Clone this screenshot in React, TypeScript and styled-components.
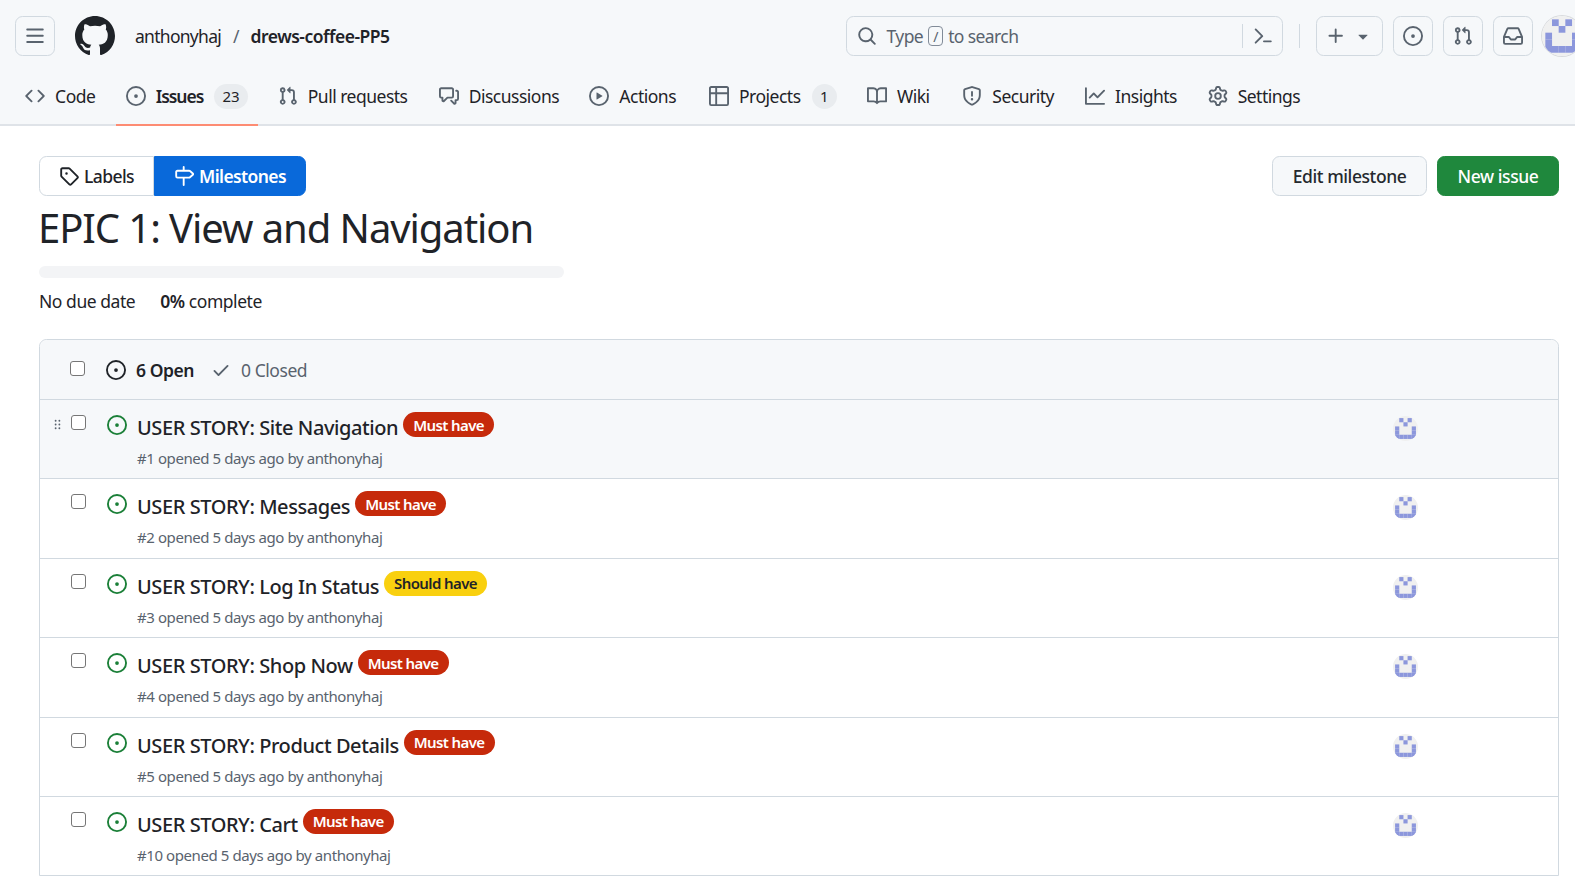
import { ReactNode } from 'react';
import styled, { createGlobalStyle } from 'styled-components';

const GlobalStyle = createGlobalStyle`
  * {
    box-sizing: border-box;
  }
  html,
  body {
    margin: 0;
    height: 100%;
    overflow: hidden;
    background: #fff;
    color: #1f2328;
    font-family: 'Noto Sans', 'Open Sans', Arial, sans-serif;
    font-size: 17.5px;
  }
`;

const Paths = {
  mark: 'M8 0c4.42 0 8 3.58 8 8a8.013 8.013 0 0 1-5.45 7.59c-.4.08-.55-.17-.55-.38 0-.27.01-1.13.01-2.2 0-.75-.25-1.23-.54-1.48 1.78-.2 3.65-.88 3.65-3.95 0-.88-.31-1.59-.82-2.15.08-.2.36-1.02-.08-2.12 0 0-.67-.22-2.2.82-.64-.18-1.32-.27-2-.27-.68 0-1.36.09-2 .27-1.53-1.03-2.2-.82-2.2-.82-.44 1.1-.16 1.92-.08 2.12-.51.56-.82 1.28-.82 2.15 0 3.06 1.86 3.75 3.64 3.95-.23.2-.44.55-.51 1.07-.46.21-1.61.55-2.33-.66-.15-.24-.6-.83-1.23-.82-.67.01-.27.38.01.53.34.19.73.9.82 1.13.16.45.68 1.31 2.69.94 0 .67.01 1.3.01 1.49 0 .21-.15.45-.55.38A7.995 7.995 0 0 1 0 8c0-4.42 3.58-8 8-8Z',
  bars: 'M1 2.75A.75.75 0 0 1 1.75 2h12.5a.75.75 0 0 1 0 1.5H1.75A.75.75 0 0 1 1 2.75Zm0 5A.75.75 0 0 1 1.75 7h12.5a.75.75 0 0 1 0 1.5H1.75A.75.75 0 0 1 1 7.75ZM1.75 12h12.5a.75.75 0 0 1 0 1.5H1.75a.75.75 0 0 1 0-1.5Z',
  code: 'm11.28 3.22 4.25 4.25a.75.75 0 0 1 0 1.06l-4.25 4.25a.749.749 0 0 1-1.275-.326.749.749 0 0 1 .215-.734L13.94 8l-3.72-3.72a.749.749 0 0 1 .326-1.275.749.749 0 0 1 .734.215Zm-6.56 0a.751.751 0 0 1 1.042.018.751.751 0 0 1 .018 1.042L2.06 8l3.72 3.72a.749.749 0 0 1-.326 1.275.749.749 0 0 1-.734-.215L.47 8.53a.75.75 0 0 1 0-1.06Z',
  issue: 'M8 9.5a1.5 1.5 0 1 0 0-3 1.5 1.5 0 0 0 0 3ZM8 0a8 8 0 1 1 0 16A8 8 0 0 1 8 0ZM1.5 8a6.5 6.5 0 1 0 13 0 6.5 6.5 0 0 0-13 0Z',
  pull: 'M1.5 3.25a2.25 2.25 0 1 1 3 2.122v5.256a2.251 2.251 0 1 1-1.5 0V5.372A2.25 2.25 0 0 1 1.5 3.25Zm5.677-.177L9.573.677A.25.25 0 0 1 10 .854V2.5h1A2.5 2.5 0 0 1 13.5 5v5.628a2.251 2.251 0 1 1-1.5 0V5a1 1 0 0 0-1-1h-1v1.646a.25.25 0 0 1-.427.177L7.177 3.427a.25.25 0 0 1 0-.354ZM3.75 2.5a.75.75 0 1 0 0 1.5.75.75 0 0 0 0-1.5Zm0 9.5a.75.75 0 1 0 0 1.5.75.75 0 0 0 0-1.5Zm8.25.75a.75.75 0 1 0 1.5 0 .75.75 0 0 0-1.5 0Z',
  discussion: 'M1.75 1h8.5c.966 0 1.75.784 1.75 1.75v5.5A1.75 1.75 0 0 1 10.25 10H7.061l-2.574 2.573A1.458 1.458 0 0 1 2 11.543V10h-.25A1.75 1.75 0 0 1 0 8.25v-5.5C0 1.784.784 1 1.75 1ZM1.5 2.75v5.5c0 .138.112.25.25.25h1a.75.75 0 0 1 .75.75v2.19l2.72-2.72a.749.749 0 0 1 .53-.22h3.5a.25.25 0 0 0 .25-.25v-5.5a.25.25 0 0 0-.25-.25h-8.5a.25.25 0 0 0-.25.25Zm13 2a.25.25 0 0 0-.25-.25h-.5a.75.75 0 0 1 0-1.5h.5c.966 0 1.75.784 1.75 1.75v5.5A1.75 1.75 0 0 1 14.25 12H14v1.543a1.458 1.458 0 0 1-2.487 1.03L9.22 12.28a.749.749 0 0 1 .326-1.275.749.749 0 0 1 .734.215l2.22 2.22v-2.19a.75.75 0 0 1 .75-.75h1a.25.25 0 0 0 .25-.25Z',
  play: 'M8 0a8 8 0 1 1 0 16A8 8 0 0 1 8 0ZM1.5 8a6.5 6.5 0 1 0 13 0 6.5 6.5 0 0 0-13 0Zm4.879-2.773 4.264 2.559a.25.25 0 0 1 0 .428l-4.264 2.559A.25.25 0 0 1 6 10.559V5.442a.25.25 0 0 1 .379-.215Z',
  table: 'M0 1.75C0 .784.784 0 1.75 0h12.5C15.216 0 16 .784 16 1.75v12.5A1.75 1.75 0 0 1 14.25 16H1.75A1.75 1.75 0 0 1 0 14.25ZM6.5 6.5v8h7.75a.25.25 0 0 0 .25-.25V6.5Zm8-1.5V1.75a.25.25 0 0 0-.25-.25H6.5V5Zm-13 1.5v7.75c0 .138.112.25.25.25H5v-8ZM5 5V1.5H1.75a.25.25 0 0 0-.25.25V5Z',
  book: 'M0 1.75A.75.75 0 0 1 .75 1h4.253c1.227 0 2.317.59 3 1.501A3.743 3.743 0 0 1 11.006 1h4.245a.75.75 0 0 1 .75.75v10.5a.75.75 0 0 1-.75.75h-4.507a2.25 2.25 0 0 0-1.591.659l-.622.621a.75.75 0 0 1-1.06 0l-.622-.621A2.25 2.25 0 0 0 5.258 13H.75a.75.75 0 0 1-.75-.75Zm7.251 10.324.004-5.073-.002-2.253A2.25 2.25 0 0 0 5.003 2.5H1.5v9h3.757a3.75 3.75 0 0 1 1.994.574ZM8.755 4.75l-.004 7.322a3.752 3.752 0 0 1 1.992-.572H14.5v-9h-3.495a2.25 2.25 0 0 0-2.25 2.25Z',
  shield: 'M7.467.133a1.748 1.748 0 0 1 1.066 0l5.25 1.68A1.75 1.75 0 0 1 15 3.48V7c0 1.566-.32 3.182-1.303 4.682-.983 1.498-2.585 2.813-5.032 3.855a1.697 1.697 0 0 1-1.33 0c-2.447-1.042-4.049-2.357-5.032-3.855C1.32 10.182 1 8.566 1 7V3.48a1.75 1.75 0 0 1 1.217-1.667Zm.61 1.429a.25.25 0 0 0-.153 0l-5.25 1.68a.25.25 0 0 0-.174.238V7c0 1.358.275 2.666 1.057 3.86.784 1.194 2.121 2.34 4.366 3.297a.196.196 0 0 0 .154 0c2.245-.956 3.582-2.104 4.366-3.298C13.225 9.666 13.5 8.36 13.5 7V3.48a.251.251 0 0 0-.174-.237l-5.25-1.68ZM8.75 4.75v3a.75.75 0 0 1-1.5 0v-3a.75.75 0 0 1 1.5 0ZM9 10.5a1 1 0 1 1-2 0 1 1 0 0 1 2 0Z',
  graph: 'M1.5 1.75V13.5h13.75a.75.75 0 0 1 0 1.5H.75a.75.75 0 0 1-.75-.75V1.75a.75.75 0 0 1 1.5 0Zm14.28 2.53-5.25 5.25a.75.75 0 0 1-1.06 0L7 7.06 4.28 9.78a.751.751 0 0 1-1.042-.018.751.751 0 0 1-.018-1.042l3.25-3.25a.75.75 0 0 1 1.06 0L10 7.94l4.72-4.72a.751.751 0 0 1 1.042.018.751.751 0 0 1 .018 1.042Z',
  gear: 'M8 0a8.2 8.2 0 0 1 .701.031C9.444.095 9.99.645 10.16 1.29l.288 1.107c.018.066.079.158.212.224.231.114.454.243.668.386.123.082.233.09.299.071l1.103-.303c.644-.176 1.392.021 1.82.63.27.385.506.792.704 1.218.315.675.111 1.422-.364 1.891l-.814.806c-.049.048-.098.147-.088.294.016.257.016.515 0 .772-.01.147.038.246.088.294l.814.806c.475.469.679 1.216.364 1.891a7.977 7.977 0 0 1-.704 1.217c-.428.61-1.176.807-1.82.63l-1.102-.302c-.067-.019-.177-.011-.3.071a5.909 5.909 0 0 1-.668.386c-.133.066-.194.158-.211.224l-.29 1.106c-.168.646-.715 1.196-1.458 1.26a8.006 8.006 0 0 1-1.402 0c-.743-.064-1.289-.614-1.458-1.26l-.289-1.106c-.018-.066-.079-.158-.212-.224a5.738 5.738 0 0 1-.668-.386c-.123-.082-.233-.09-.299-.071l-1.103.303c-.644.176-1.392-.021-1.82-.63a8.12 8.12 0 0 1-.704-1.218c-.315-.675-.111-1.422.363-1.891l.815-.806c.05-.048.098-.147.088-.294a6.214 6.214 0 0 1 0-.772c.01-.147-.038-.246-.088-.294l-.815-.806C.635 6.045.431 5.298.746 4.623a7.92 7.92 0 0 1 .704-1.217c.428-.61 1.176-.807 1.82-.63l1.102.302c.067.019.177.011.3-.071.214-.143.437-.272.668-.386.133-.066.194-.158.211-.224l.29-1.106C6.009.645 6.556.095 7.299.03 7.53.01 7.764 0 8 0Zm-.571 1.525c-.036.003-.108.036-.137.146l-.289 1.105c-.147.561-.549.967-.998 1.189-.173.086-.34.183-.5.29-.417.278-.97.423-1.529.27l-1.103-.303c-.109-.03-.175.016-.195.045-.22.312-.412.644-.573.99-.014.031-.021.11.059.19l.815.806c.411.406.562.957.53 1.456a4.709 4.709 0 0 0 0 .582c.032.499-.119 1.05-.53 1.456l-.815.806c-.081.08-.073.159-.059.19.162.346.353.677.573.989.02.03.085.076.195.046l1.102-.303c.56-.153 1.113-.008 1.53.27.161.107.328.204.501.29.447.222.85.629.997 1.189l.289 1.105c.029.109.101.143.137.146a6.6 6.6 0 0 0 1.142 0c.036-.003.108-.036.137-.146l.289-1.105c.147-.561.549-.967.998-1.189.173-.086.34-.183.5-.29.417-.278.97-.423 1.529-.27l1.103.303c.109.029.175-.016.195-.045.22-.313.411-.644.573-.99.014-.031.021-.11-.059-.19l-.815-.806c-.411-.406-.562-.957-.53-1.456a4.709 4.709 0 0 0 0-.582c-.032-.499.119-1.05.53-1.456l.815-.806c.081-.08.073-.159.059-.19a6.464 6.464 0 0 0-.573-.989c-.02-.03-.085-.076-.195-.046l-1.102.303c-.56.153-1.113.008-1.53-.27a4.44 4.44 0 0 0-.501-.29c-.447-.222-.85-.629-.997-1.189l-.289-1.105c-.029-.11-.101-.143-.137-.146a6.6 6.6 0 0 0-1.142 0ZM11 8a3 3 0 1 1-6 0 3 3 0 0 1 6 0ZM9.5 8a1.5 1.5 0 1 0-3.001.001A1.5 1.5 0 0 0 9.5 8Z',
  search: 'M10.68 11.74a6 6 0 0 1-7.922-8.982 6 6 0 0 1 8.982 7.922l3.04 3.04a.749.749 0 0 1-.326 1.275.749.749 0 0 1-.734-.215ZM11.5 7a4.499 4.499 0 1 0-8.997 0A4.499 4.499 0 0 0 11.5 7Z',
  terminal: 'm6.354 8.04-4.773 4.773a.75.75 0 1 0 1.061 1.06L7.945 8.57a.75.75 0 0 0 0-1.06L2.642 2.206a.75.75 0 0 0-1.06 1.061L6.353 8.04ZM8.75 11.5a.75.75 0 0 0 0 1.5h5.5a.75.75 0 0 0 0-1.5h-5.5Z',
  plus: 'M7.75 2a.75.75 0 0 1 .75.75V7h4.25a.75.75 0 0 1 0 1.5H8.5v4.25a.75.75 0 0 1-1.5 0V8.5H2.75a.75.75 0 0 1 0-1.5H7V2.75A.75.75 0 0 1 7.75 2Z',
  caret: 'm4.427 7.427 3.396 3.396a.25.25 0 0 0 .354 0l3.396-3.396A.25.25 0 0 0 11.396 7H4.604a.25.25 0 0 0-.177.427Z',
  inbox: 'M2.8 2.06A1.75 1.75 0 0 1 4.41 1h7.18c.7 0 1.333.417 1.61 1.06l2.74 6.395c.04.093.06.194.06.295v4.5A1.75 1.75 0 0 1 14.25 15H1.75A1.75 1.75 0 0 1 0 13.25v-4.5c0-.101.02-.202.06-.295Zm1.61.44a.25.25 0 0 0-.23.152L1.887 8H4.75a.75.75 0 0 1 .6.3L6.625 10h2.75l1.275-1.7a.75.75 0 0 1 .6-.3h2.863L11.82 2.652a.25.25 0 0 0-.23-.152Zm10.09 7h-2.875l-1.275 1.7a.75.75 0 0 1-.6.3h-3.5a.75.75 0 0 1-.6-.3L4.375 9.5H1.5v3.75c0 .138.112.25.25.25h12.5a.25.25 0 0 0 .25-.25Z',
  tag: 'M1 7.775V2.75C1 1.784 1.784 1 2.75 1h5.025c.464 0 .91.184 1.238.513l6.25 6.25a1.75 1.75 0 0 1 0 2.474l-5.026 5.026a1.75 1.75 0 0 1-2.474 0l-6.25-6.25A1.752 1.752 0 0 1 1 7.775Zm1.5 0c0 .066.026.13.073.177l6.25 6.25a.25.25 0 0 0 .354 0l5.025-5.025a.25.25 0 0 0 0-.354l-6.25-6.25a.25.25 0 0 0-.177-.073H2.75a.25.25 0 0 0-.25.25ZM6 5a1 1 0 1 1 0 2 1 1 0 0 1 0-2Z',
  milestone: 'M7.75 0a.75.75 0 0 1 .75.75V3h3.634c.414 0 .814.147 1.13.414l2.07 1.75a1.75 1.75 0 0 1 0 2.672l-2.07 1.75a1.75 1.75 0 0 1-1.13.414H8.5v5.25a.75.75 0 0 1-1.5 0V10H2.75A1.75 1.75 0 0 1 1 8.25v-3.5C1 3.784 1.784 3 2.75 3H7V.75A.75.75 0 0 1 7.75 0Zm4.384 8.5a.25.25 0 0 0 .161-.06l2.07-1.75a.248.248 0 0 0 0-.38l-2.07-1.75a.25.25 0 0 0-.161-.06H2.75a.25.25 0 0 0-.25.25v3.5c0 .138.112.25.25.25h9.384Z',
  check: 'M13.78 4.22a.75.75 0 0 1 0 1.06l-7.25 7.25a.75.75 0 0 1-1.06 0L2.22 9.28a.751.751 0 0 1 .018-1.042.751.751 0 0 1 1.042-.018L6 10.94l6.72-6.72a.75.75 0 0 1 1.06 0Z',
  grabber: 'M10 13a1 1 0 1 1 0-2 1 1 0 0 1 0 2Zm-4 0a1 1 0 1 1 0-2 1 1 0 0 1 0 2Zm1-5a1 1 0 1 1-2 0 1 1 0 0 1 2 0Zm3 1a1 1 0 1 1 0-2 1 1 0 0 1 0 2Zm1-5a1 1 0 1 1-2 0 1 1 0 0 1 2 0ZM6 5a1 1 0 1 1 0-2 1 1 0 0 1 0 2Z',
};

type IconName = keyof typeof Paths;

const Svg = styled.svg<{ $color?: string }>`
  flex: none;
  display: block;
  fill: ${({ $color }) => $color ?? '#59636e'};
`;

function Icon({ name, size = 20, color }: { name: IconName; size?: number; color?: string }) {
  return (
    <Svg viewBox="0 0 16 16" width={size} height={size} $color={color}>
      <path fillRule="evenodd" d={Paths[name]} />
    </Svg>
  );
}

// identicon pattern of the user, 5x5 cells
const IDENTICON: [number, number][] = [
  [1, 0], [3, 0], [2, 1], [0, 2], [4, 2], [0, 3], [4, 3],
  [0, 4], [1, 4], [2, 4], [3, 4], [4, 4],
];

function Identicon({ size }: { size: number }) {
  return (
    <svg viewBox="0 0 420 420" width={size} height={size} style={{ display: 'block', borderRadius: '50%' }}>
      <rect width="420" height="420" fill="#f0f0f0" />
      {IDENTICON.map(([x, y]) => (
        <rect key={`${x}-${y}`} x={35 + x * 70} y={35 + y * 70} width="70.5" height="70.5" fill="#8c97dc" />
      ))}
    </svg>
  );
}

const Header = styled.header`
  height: 126px;
  background: #f6f8fa;
  border-bottom: 2px solid #dfe3e8;
  padding: 16px 0 0 15px;
`;
const TopRow = styled.div`
  display: flex;
  align-items: center;
  height: 40px;
  width: 1600px;
`;
const IconButton = styled.button<{ $w?: number }>`
  width: ${({ $w }) => $w ?? 40}px;
  height: 40px;
  flex: none;
  padding: 0;
  display: flex;
  align-items: center;
  justify-content: center;
  gap: 7px;
  background: #f6f8fa;
  border: 1px solid #d1d9e0;
  border-radius: 7.5px;
`;
const Logo = styled.div`
  margin-left: 20px;
  margin-right: 20px;
`;
const Crumb = styled.span`
  letter-spacing: -0.72px;
  color: #1f2328;
`;
const Slash = styled.span`
  color: #59636e;
  margin: 0 11px 0 12px;
`;
const RepoName = styled.span`
  font-weight: 600;
  letter-spacing: -0.5px;
  color: #1f2328;
`;
const SearchBox = styled.div`
  margin-left: 456px;
  width: 437px;
  height: 40px;
  display: flex;
  align-items: center;
  padding: 0 9px 0 10px;
  border: 1px solid #d1d9e0;
  border-radius: 7.5px;
`;
const SearchText = styled.div`
  flex: 1;
  display: flex;
  align-items: center;
  margin-left: 10px;
  color: #59636e;
  letter-spacing: -0.6px;
  border-right: 1px solid #d1d9e0;
  height: 24px;
`;
const SlashKey = styled.kbd`
  display: inline-flex;
  align-items: center;
  justify-content: center;
  width: 15px;
  height: 20px;
  margin: 0 5px;
  border: 1px solid #818b98;
  border-radius: 4px;
  font-family: inherit;
  font-size: 14px;
`;
const TerminalSlot = styled.div`
  margin-left: 10px;
`;
const Divider = styled.div`
  width: 1px;
  height: 24px;
  margin: 0 16px 0 16px;
  background: #d1d9e0;
`;
const ActionGroup = styled.div`
  display: flex;
  gap: 10px;
`;
const AvatarButton = styled.div`
  margin-left: 9px;
  width: 40px;
  height: 40px;
  flex: none;
  border-radius: 50%;
  box-shadow: 0 0 0 1px #d8dadd;
`;
const Tabs = styled.nav`
  display: flex;
  gap: 10px;
  margin-top: 10px;
  height: 58px;
`;
const Tab = styled.a<{ $active?: boolean }>`
  position: relative;
  display: flex;
  align-items: center;
  gap: 10.1px;
  padding: 0 10px;
  height: 60px;
  white-space: nowrap;
  letter-spacing: ${({ $active }) => ($active ? '-1.05px' : '-0.5px')};
  font-weight: ${({ $active }) => ($active ? 600 : 400)};
  color: #1f2328;
  &::after {
    content: '';
    display: ${({ $active }) => ($active ? 'block' : 'none')};
    position: absolute;
    left: 0;
    right: 0;
    bottom: 0;
    height: 2.5px;
    background: #fd8c73;
  }
`;
const TabLabel = styled.span<{ $w: number }>`
  width: ${({ $w }) => $w}px;
`;
const Counter = styled.span`
  min-width: 25px;
  height: 25px;
  padding: 0 8px;
  display: flex;
  align-items: center;
  justify-content: center;
  border-radius: 13px;
  background: #e9ecef;
  font-size: 15px;
  font-weight: 400;
  letter-spacing: 0;
`;

const Page = styled.main`
  padding: 30px 16px 0 39px;
`;
const PageTop = styled.div`
  display: flex;
  justify-content: space-between;
`;
const SubNav = styled.div`
  display: flex;
  height: 40px;
`;
const SubNavItem = styled.a<{ $selected?: boolean; $w: number }>`
  width: ${({ $w }) => $w}px;
  display: flex;
  align-items: center;
  justify-content: center;
  gap: 5px;
  font-weight: ${({ $selected }) => ($selected ? 600 : 500)};
  letter-spacing: -0.6px;
  color: ${({ $selected }) => ($selected ? '#fff' : '#1f2328')};
  background: ${({ $selected }) => ($selected ? '#0969da' : '#fff')};
  border: 1px solid ${({ $selected }) => ($selected ? '#0969da' : '#d1d9e0')};
  border-radius: ${({ $selected }) => ($selected ? '0 7.5px 7.5px 0' : '7.5px 0 0 7.5px')};
`;
const Buttons = styled.div`
  display: flex;
  gap: 10px;
`;
const Button = styled.button<{ $primary?: boolean; $w: number }>`
  width: ${({ $w }) => $w}px;
  height: 40px;
  padding: 0;
  font-family: inherit;
  font-size: 17.5px;
  font-weight: 500;
  letter-spacing: -0.42px;
  color: ${({ $primary }) => ($primary ? '#fff' : '#25292e')};
  background: ${({ $primary }) => ($primary ? '#1f883d' : '#f6f8fa')};
  border: 1px solid ${({ $primary }) => ($primary ? '#1f883d' : '#d1d9e0')};
  border-radius: 7.5px;
`;
const Title = styled.h1`
  margin: 2px 0 0;
  height: 60px;
  font-size: 40px;
  line-height: 60px;
  font-weight: 400;
  letter-spacing: -1.07px;
  text-indent: -1px;
`;
const Progress = styled.div`
  width: 525px;
  height: 12px;
  margin-top: 8px;
  border-radius: 6px;
  background: #f3f4f6;
`;
const Meta = styled.div`
  display: flex;
  gap: 25px;
  margin-top: 11px;
  height: 24px;
  line-height: 24px;
  letter-spacing: -0.45px;
`;
const Strong = styled.strong`
  font-weight: 600;
`;

const Box = styled.section`
  margin-top: 26px;
  border: 1px solid #d1d9e0;
  border-bottom-left-radius: 0;
  border-radius: 7.5px 7.5px 0 0;
`;
const BoxHeader = styled.div`
  height: 59px;
  display: flex;
  align-items: center;
  background: #f6f8fa;
  border-radius: 7.5px 7.5px 0 0;
  padding-left: 30px;
`;
const Checkbox = styled.span`
  display: block;
  flex: none;
  width: 15px;
  height: 15px;
  background: #fff;
  border: 1px solid #767676;
  border-radius: 3px;
`;
const HeaderCheck = styled(Checkbox)`
  margin: -3px 21px 0 0;
`;
const OpenCount = styled.span`
  margin: 0 17px 0 10px;
  font-weight: 600;
  letter-spacing: -0.45px;
`;
const ClosedCount = styled.span`
  margin-left: 10px;
  color: #59636e;
  letter-spacing: -0.45px;
`;
const Row = styled.div<{ $hover?: boolean }>`
  position: relative;
  height: 79.4px;
  display: flex;
  padding: 15px 0 0 31px;
  border-top: 1px solid #d1d9e0;
  background: ${({ $hover }) => ($hover ? '#f6f8fa' : '#fff')};
`;
const Grabber = styled.div`
  position: absolute;
  left: 10px;
  top: 17px;
`;
const RowCheck = styled(Checkbox)`
  margin: 0 21px 0 0;
`;
const RowBody = styled.div`
  margin-left: 10px;
  width: 1256px;
  flex: none;
`;
const TitleLine = styled.div`
  display: flex;
  align-items: flex-start;
  height: 32px;
`;
const IssueTitle = styled.a`
  font-size: 20px;
  line-height: 26px;
  font-weight: 500;
  letter-spacing: -0.42px;
  color: #1f2328;
`;
const Label = styled.span<{ $bg: string; $fg: string }>`
  margin: -3px 0 0 5px;
  height: 25px;
  padding: 0 10px;
  display: flex;
  align-items: center;
  border-radius: 13px;
  font-size: 15px;
  font-weight: 600;
  letter-spacing: -0.6px;
  background: ${({ $bg }) => $bg};
  color: ${({ $fg }) => $fg};
`;
const Opened = styled.div`
  margin-top: 1px;
  font-size: 15px;
  line-height: 20px;
  letter-spacing: -0.42px;
  color: #59636e;
`;
const Assignee = styled.div`
  margin-top: 1px;
`;

const TABS: { icon: IconName; label: string; w: number; count?: number; active?: boolean }[] = [
  { icon: 'code', label: 'Code', w: 40.6 },
  { icon: 'issue', label: 'Issues', w: 48.6, count: 23, active: true },
  { icon: 'pull', label: 'Pull requests', w: 100.8 },
  { icon: 'discussion', label: 'Discussions', w: 90.6 },
  { icon: 'play', label: 'Actions', w: 59.6 },
  { icon: 'table', label: 'Projects', w: 62.7, count: 1 },
  { icon: 'book', label: 'Wiki', w: 35.4 },
  { icon: 'shield', label: 'Security', w: 62.6 },
  { icon: 'graph', label: 'Insights', w: 62.5 },
  { icon: 'gear', label: 'Settings', w: 62 },
];

const MUST = { text: 'Must have', bg: '#c62a0b', fg: '#fff' };
const SHOULD = { text: 'Should have', bg: '#f9d00f', fg: '#1f2328' };

const ISSUES = [
  { id: 1, title: 'USER STORY: Site Navigation', label: MUST },
  { id: 2, title: 'USER STORY: Messages', label: MUST },
  { id: 3, title: 'USER STORY: Log In Status', label: SHOULD },
  { id: 4, title: 'USER STORY: Shop Now', label: MUST },
  { id: 5, title: 'USER STORY: Product Details', label: MUST },
  { id: 10, title: 'USER STORY: Cart', label: MUST },
];

function HeaderAction({ children, w }: { children: ReactNode; w?: number }) {
  return <IconButton $w={w}>{children}</IconButton>;
}

export default function App() {
  return (
    <>
      <GlobalStyle />
      <Header>
        <TopRow>
          <HeaderAction>
            <Icon name="bars" />
          </HeaderAction>
          <Logo>
            <Icon name="mark" size={40} color="#1f2328" />
          </Logo>
          <Crumb>anthonyhaj</Crumb>
          <Slash>/</Slash>
          <RepoName>drews-coffee-PP5</RepoName>
          <SearchBox>
            <Icon name="search" />
            <SearchText>
              Type<SlashKey>/</SlashKey>to search
            </SearchText>
            <TerminalSlot>
              <Icon name="terminal" />
            </TerminalSlot>
          </SearchBox>
          <Divider />
          <ActionGroup>
            <HeaderAction w={67}>
              <Icon name="plus" />
              <Icon name="caret" size={20} />
            </HeaderAction>
            <HeaderAction>
              <Icon name="issue" />
            </HeaderAction>
            <HeaderAction>
              <Icon name="pull" />
            </HeaderAction>
            <HeaderAction>
              <Icon name="inbox" />
            </HeaderAction>
          </ActionGroup>
          <AvatarButton>
            <Identicon size={40} />
          </AvatarButton>
        </TopRow>
        <Tabs>
          {TABS.map((tab) => (
            <Tab key={tab.label} $active={tab.active}>
              <Icon name={tab.icon} />
              <TabLabel $w={tab.w}>{tab.label}</TabLabel>
              {tab.count !== undefined && <Counter>{tab.count}</Counter>}
            </Tab>
          ))}
        </Tabs>
      </Header>
      <Page>
        <PageTop>
          <SubNav>
            <SubNavItem $w={115}>
              <Icon name="tag" color="#1f2328" />
              Labels
            </SubNavItem>
            <SubNavItem $w={152} $selected>
              <Icon name="milestone" color="#fff" />
              Milestones
            </SubNavItem>
          </SubNav>
          <Buttons>
            <Button $w={155}>Edit milestone</Button>
            <Button $w={122} $primary>
              New issue
            </Button>
          </Buttons>
        </PageTop>
        <Title>EPIC 1: View and Navigation</Title>
        <Progress />
        <Meta>
          <span>No due date</span>
          <span>
            <Strong>0%</Strong> complete
          </span>
        </Meta>
        <Box>
          <BoxHeader>
            <HeaderCheck />
            <Icon name="issue" color="#1f2328" />
            <OpenCount>6 Open</OpenCount>
            <Icon name="check" />
            <ClosedCount>0 Closed</ClosedCount>
          </BoxHeader>
          {ISSUES.map((issue, i) => (
            <Row key={issue.id} $hover={i === 0}>
              {i === 0 && (
                <Grabber>
                  <Icon name="grabber" size={15} color="#59636e" />
                </Grabber>
              )}
              <RowCheck />
              <Icon name="issue" color="#1a7f37" />
              <RowBody>
                <TitleLine>
                  <IssueTitle>{issue.title}</IssueTitle>
                  <Label $bg={issue.label.bg} $fg={issue.label.fg}>
                    {issue.label.text}
                  </Label>
                </TitleLine>
                <Opened>#{issue.id} opened 5 days ago by anthonyhaj</Opened>
              </RowBody>
              <Assignee>
                <Identicon size={25} />
              </Assignee>
            </Row>
          ))}
        </Box>
      </Page>
    </>
  );
}
